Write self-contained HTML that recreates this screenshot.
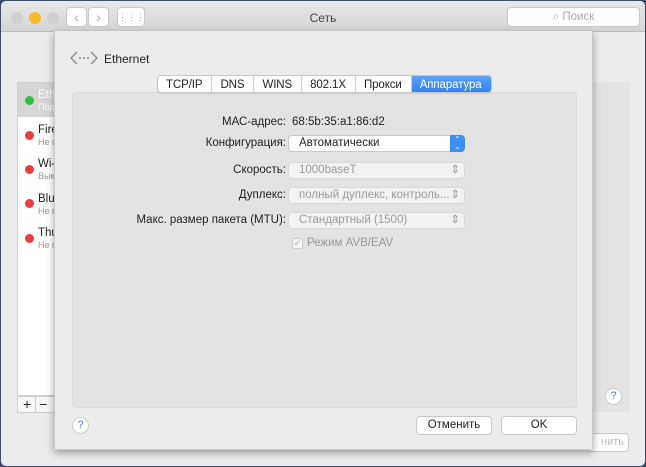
<!DOCTYPE html>
<html><head><meta charset="utf-8"><style>
*{box-sizing:border-box;margin:0;padding:0}
body{width:646px;height:467px;background:#3b4d6b;font-family:"Liberation Sans",sans-serif;font-size:11px;color:#222;position:relative;overflow:hidden}
.win{position:absolute;left:1px;top:1px;width:644px;height:465px;background:#ececec;border-radius:5px;overflow:hidden}
.title{position:absolute;left:0;top:0;width:644px;height:31px;background:linear-gradient(#e8e8e8,#d5d5d5);border-bottom:1px solid #bdbdbd}
.tl{position:absolute;top:11px;width:12px;height:12px;border-radius:50%}
.abs{position:absolute}
.btn{position:absolute;background:#fff;border:1px solid #c8c8c8;border-radius:4px;text-align:center}
.sheet{position:absolute;left:54px;top:31px;width:539px;height:419px;background:#ececec;box-shadow:0 3px 8px rgba(0,0,0,.35);border:1px solid #c9c9c9;border-top:none}
.panel{position:absolute;left:17px;top:61px;width:505px;height:316px;background:#e3e3e3;border:1px solid #dadada;border-radius:3px}
.tabs{position:absolute;left:102px;top:44px;height:18px;display:flex;background:#fff;border:1px solid #c5c5c5;border-radius:4px;overflow:hidden;box-shadow:0 1px 1px rgba(0,0,0,.1)}
.tabs div{padding:2px 9px 0 8px;font-size:11.5px;border-right:1px solid #d0d0d0;line-height:15px;letter-spacing:-0.1px}
.tabs .on{background:linear-gradient(#5ea4f7,#2f80f0);color:#fff;border:none}
.lbl{position:absolute;text-align:right;width:200px;font-size:11.5px}
.pop{position:absolute;left:287px;width:177px;height:17px;background:#f2f2f2;border:1px solid #d8d8d8;border-radius:4px;padding-left:10px;line-height:15px;color:#9c9c9c;font-size:11.5px}
.dot{position:absolute;left:24px;width:9px;height:9px;border-radius:50%;background:#ec3a3d}
</style></head><body>
<div class="win">
<div class="title">
 <div class="tl" style="left:10px;background:#cfcfcf"></div>
 <div class="tl" style="left:28px;background:#f5bb2b"></div>
 <div class="tl" style="left:46px;background:#cfcfcf"></div>
 <div class="btn" style="left:65px;top:6px;width:21px;height:20px;color:#aaa;line-height:18px;font-size:14px">‹</div>
 <div class="btn" style="left:87px;top:6px;width:21px;height:20px;color:#aaa;line-height:18px;font-size:14px">›</div>
 <div class="btn" style="left:116px;top:6px;width:28px;height:20px;color:#aaa;line-height:18px;font-size:9px">⋮⋮⋮</div>
 <div class="abs" style="left:0;width:644px;top:10px;text-align:center;font-size:12px;color:#444">Сеть</div>
 <div class="btn" style="left:506px;top:6px;width:133px;height:20px;color:#aaa;line-height:18px;font-size:11.5px">⌕ Поиск</div>
</div>
<div class="abs" style="left:16px;top:81px;width:40px;height:314px;background:#fff;border:1px solid #cfcfcf"></div>
<div class="abs" style="left:17px;top:82px;width:39px;height:34px;background:#d6d6d6"></div>
<div class="dot" style="top:95px;background:#2fc240"></div>
<div class="abs" style="left:37px;top:88px;color:#fff;font-size:11.5px">Eth<br><span style="font-size:9px">Под</span></div>
<div class="dot" style="top:130px"></div><div class="abs" style="left:37px;top:123px;font-size:11.5px;line-height:12px">Fire<br><span style="font-size:9px;color:#999">Не п</span></div>
<div class="dot" style="top:164px"></div><div class="abs" style="left:37px;top:157px;font-size:11.5px;line-height:12px">Wi-<br><span style="font-size:9px;color:#999">Вык</span></div>
<div class="dot" style="top:198px"></div><div class="abs" style="left:37px;top:192px;font-size:11.5px;line-height:12px">Blu<br><span style="font-size:9px;color:#999">Не п</span></div>
<div class="dot" style="top:233px"></div><div class="abs" style="left:37px;top:226px;font-size:11.5px;line-height:12px">Thu<br><span style="font-size:9px;color:#999">Не п</span></div>
<div class="abs" style="left:16px;top:395px;width:40px;height:17px;border:1px solid #cfcfcf;background:#f6f6f6;font-size:14px;line-height:14px;padding-left:5px">+ <span style="border-left:1px solid #ccc;padding-left:3px">−</span></div>
<div class="abs" style="left:592px;top:81px;width:37px;height:330px;background:#e3e3e3"></div>
<div class="abs" style="left:604px;top:387px;width:17px;height:17px;border-radius:50%;background:#fff;border:1px solid #ccc;color:#3b82f0;text-align:center;line-height:15px;font-size:11px">?</div>
<div class="btn" style="left:585px;top:432px;width:43px;height:19px;color:#bbb;line-height:17px;text-align:right;padding-right:4px">нить</div>
</div>
<div class="sheet">
 <svg class="abs" style="left:14px;top:19px" width="30" height="16"><path d="M8 2L2 8L8 14M22 2L28 8L22 14" stroke="#888" fill="none" stroke-width="1.3"/><circle cx="11" cy="8" r="1" fill="#888"/><circle cx="15" cy="8" r="1" fill="#888"/><circle cx="19" cy="8" r="1" fill="#888"/></svg>
 <div class="abs" style="left:49px;top:21px;font-size:12px">Ethernet</div>
 <div class="panel"></div>
 <div class="tabs"><div>TCP/IP</div><div>DNS</div><div>WINS</div><div>802.1X</div><div>Прокси</div><div class="on">Аппаратура</div></div>
 <div class="lbl" style="left:31px;top:85px">МАС-адрес:</div>
 <div class="abs" style="left:237px;top:85px;font-size:11.5px">68:5b:35:a1:86:d2</div>
 <div class="lbl" style="left:31px;top:106px">Конфигурация:</div>
 <div class="pop" style="left:233px;top:104px;background:#fff;color:#222;border-color:#c8c8c8">Автоматически<div class="abs" style="right:-1px;top:-1px;width:15px;height:17px;background:#3d8ef5;border-radius:0 4px 4px 0;color:#fff;font-size:8px;text-align:center;line-height:7px;padding-top:1px">⌃<br>⌄</div></div>
 <div class="lbl" style="left:31px;top:133px">Скорость:</div>
 <div class="pop" style="left:233px;top:131px">1000baseT<span class="abs" style="right:4px;top:0">⇕</span></div>
 <div class="lbl" style="left:31px;top:158px">Дуплекс:</div>
 <div class="pop" style="left:233px;top:156px">полный дуплекс, контроль...<span class="abs" style="right:4px;top:0">⇕</span></div>
 <div class="lbl" style="left:31px;top:183px">Макс. размер пакета (MTU):</div>
 <div class="pop" style="left:233px;top:181px">Стандартный (1500)<span class="abs" style="right:4px;top:0">⇕</span></div>
 <div class="abs" style="left:237px;top:207px;width:11px;height:11px;border:1px solid #ccc;background:#f4f4f4;border-radius:2px;font-size:9px;color:#aaa;line-height:9px;text-align:center">✓</div>
 <div class="abs" style="left:252px;top:206px;font-size:11.5px;color:#999">Режим AVB/EAV</div>
 <div class="abs" style="left:17px;top:386px;width:17px;height:17px;border-radius:50%;background:#fff;border:1px solid #ccc;color:#3b82f0;text-align:center;line-height:15px;font-size:11px">?</div>
 <div class="btn" style="left:361px;top:385px;width:76px;height:19px;line-height:17px;font-size:11.5px">Отменить</div>
 <div class="btn" style="left:446px;top:385px;width:76px;height:19px;line-height:17px;font-size:11.5px">OK</div>
</div>
</body></html>
